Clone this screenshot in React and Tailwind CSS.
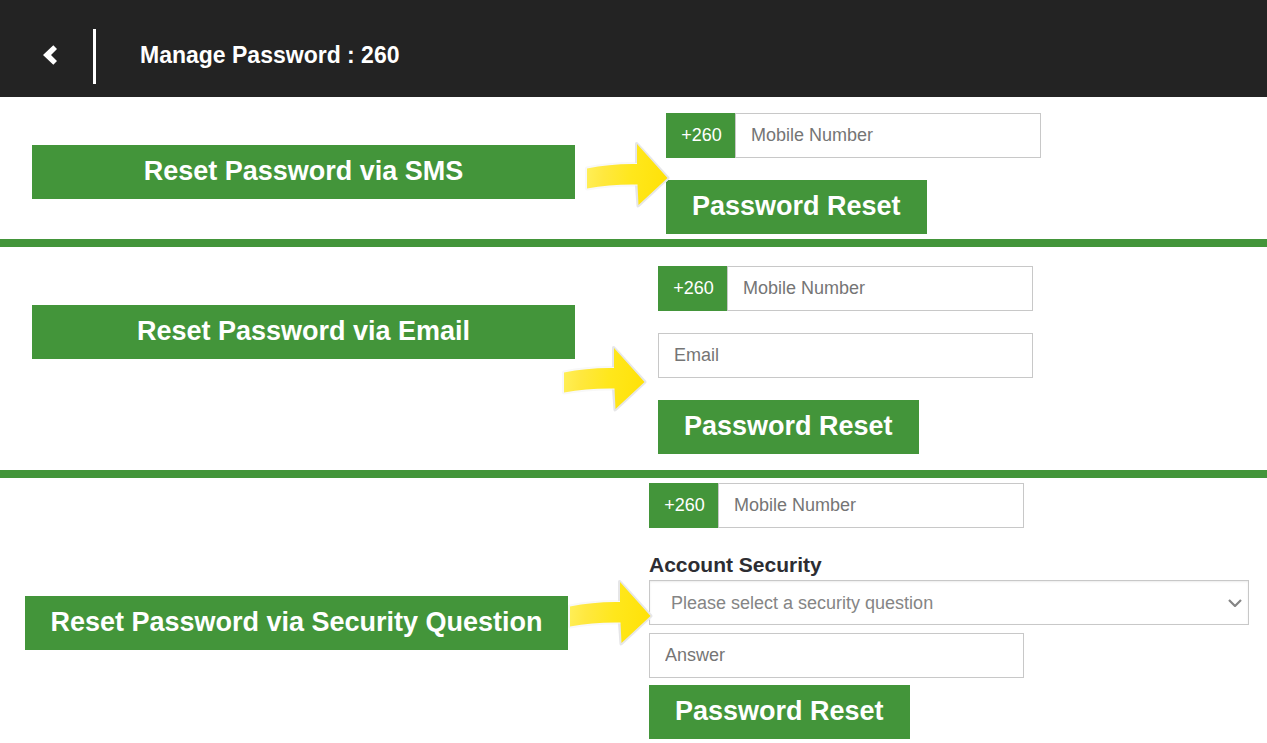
import { useId } from "react";

function Arrow({ className }) {
  const id = useId();
  const shape = "M2 28.5 Q26 23.5 52 24 L52 4 L82.5 38 L53.5 65 L52.5 44.5 Q26 44 2 48.5 Z";
  return (
    <svg aria-hidden="true" viewBox="0 0 86 70" className={`pointer-events-none absolute right-full z-10 h-[70px] w-[86px] ${className}`}>
      <defs>
        <linearGradient id={id} x1="0" y1="0" x2="1" y2="0.1">
          <stop offset="0" stopColor="#fff05c" />
          <stop offset="0.25" stopColor="#ffe83f" />
          <stop offset="0.6" stopColor="#ffe71c" />
          <stop offset="1" stopColor="#ffe20a" />
        </linearGradient>
      </defs>
      <path d={shape} fill="none" stroke="#f8f8f8" strokeWidth="4" strokeLinejoin="round" />
      <path d="M51.5 23 L51.5 3.5 L83 38 L53 66 L51.5 45.5" fill="none" stroke="#e6e6e8" strokeWidth="3" strokeLinejoin="round" />
      <path d={shape} fill={`url(#${id})`} />
    </svg>
  );
}

function MethodLabel({ children, className }) {
  return (
    <button type="button" className={`h-[54px] w-[543px] shrink bg-[#43953a] px-4 pb-0.5 text-center text-[27px] leading-8 font-bold whitespace-nowrap text-white ${className}`}>
      {children}
    </button>
  );
}

function MobileField({ id }) {
  return (
    <div className="flex h-[45px] w-full max-w-[375px]">
      <label htmlFor={id} className="flex w-[69px] shrink-0 items-center justify-center bg-[#43953a] pb-0.5 pl-0.5 text-lg text-white">
        +260
      </label>
      <input
        id={id}
        type="tel"
        aria-label="Mobile Number"
        placeholder="Mobile Number"
        className="min-w-0 flex-1 border border-[#c8c8c8] bg-white px-[15px] pb-0.5 text-lg placeholder:text-[#757575]"
      />
    </div>
  );
}

function TextField({ label, type = "text" }) {
  return (
    <input
      type={type}
      aria-label={label}
      placeholder={label}
      className="h-[45px] w-full max-w-[375px] border border-[#c8c8c8] bg-white px-[15px] text-lg placeholder:text-[#757575]"
    />
  );
}

function ResetButton() {
  return (
    <button type="submit" className="h-[54px] bg-[#43953a] px-[26px] pb-0.5 text-[27px] leading-8 font-bold whitespace-nowrap text-white">
      Password Reset
    </button>
  );
}

const submit = (event) => event.preventDefault();

export default function App() {
  return (
    <div className="min-h-screen bg-white font-['Liberation_Sans',Arial,sans-serif]">
      <header className="flex h-[97px] items-start bg-[#232323] pt-[29px]">
        <button type="button" aria-label="Back" className="flex h-[51px] w-[93px] items-center pl-[43px]">
          <svg aria-hidden="true" viewBox="0 0 14 20" className="h-5 w-3.5">
            <path d="M10.3.3 14 4 8 10 14 16 10.3 19.7 0 10Z" fill="#fff" />
          </svg>
        </button>
        <span className="h-[55px] w-[3px] bg-white" />
        <h1 className="pl-11 text-[23px] leading-[52px] font-bold text-white">Manage Password : 260</h1>
      </header>

      <main>
        <section className="flex items-start border-b-8 border-[#43953a] pt-4 pb-[5px] pl-8">
          <MethodLabel className="mt-8">Reset Password via SMS</MethodLabel>
          <form onSubmit={submit} className="relative ml-[91px] flex flex-1 flex-col items-start gap-[22px]">
            <Arrow className="top-[27px] -mr-[5px]" />
            <MobileField id="sms-mobile" />
            <ResetButton />
          </form>
        </section>

        <section className="flex items-start border-b-8 border-[#43953a] pt-[19px] pb-4 pl-8">
          <MethodLabel className="mt-[39px]">Reset Password via Email</MethodLabel>
          <form onSubmit={submit} className="relative ml-[83px] flex flex-1 flex-col items-start gap-[22px]">
            <Arrow className="top-[78px] mr-[10px]" />
            <MobileField id="email-mobile" />
            <TextField label="Email" type="email" />
            <ResetButton />
          </form>
        </section>

        <section className="flex items-start pt-[5px] pb-1 pl-[25px]">
          <MethodLabel className="mt-[113px]">Reset Password via Security Question</MethodLabel>
          <form onSubmit={submit} className="relative mr-[18px] ml-[81px] flex flex-1 flex-col items-start">
            <Arrow className="top-[95px] -mr-[5px]" />
            <MobileField id="security-mobile" />
            <label htmlFor="security-question" className="mt-[23px] mb-px text-[21px] leading-7 font-bold text-[#2d2d32]">
              Account Security
            </label>
            <div className="grid w-full items-center">
              <select
                id="security-question"
                defaultValue=""
                className="col-start-1 row-start-1 h-[45px] w-full appearance-none border border-[#c8c8c8] bg-white pr-10 pl-[21px] text-lg text-[#858585] shadow-[inset_0_1px_2px_rgba(0,0,0,0.08)]"
              >
                <option value="">Please select a security question</option>
              </select>
              <svg aria-hidden="true" viewBox="0 0 14 8" className="pointer-events-none col-start-1 row-start-1 mr-[7px] h-2 w-3.5 justify-self-end">
                <path d="M1 1 7 7 13 1" fill="none" stroke="#858585" strokeWidth="2.2" />
              </svg>
            </div>
            <div className="mt-2 mb-[7px] flex w-full">
              <TextField label="Answer" />
            </div>
            <ResetButton />
          </form>
        </section>
      </main>
    </div>
  );
}
